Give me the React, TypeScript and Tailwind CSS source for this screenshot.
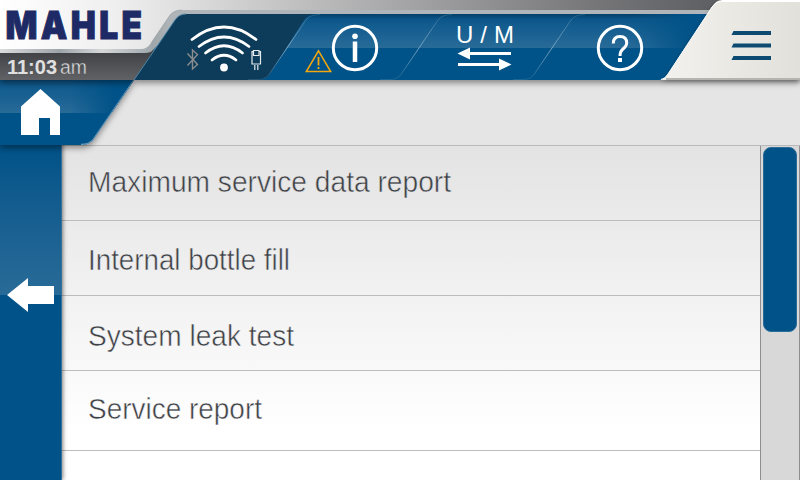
import React from "react";

const menuItems = [
  { label: "Maximum service data report", width: 363, row: "h-[75px]", y: 46, line: "#e8e8e8" },
  { label: "Internal bottle fill", width: 202, row: "h-[75px]", y: 49, line: "#f0f0f0" },
  { label: "System leak test", width: 206, row: "h-[75px]", y: 50, line: "#f9f9f9" },
  { label: "Service report", width: 174, row: "h-20", y: 48, line: "#fefefe" },
];

function Header() {
  return (
    <svg className="absolute left-0 top-0 z-10" width="800" height="160" viewBox="0 0 800 160">
      <defs>
        <linearGradient id="silver" x1="0" x2="800" y1="0" y2="0" gradientUnits="userSpaceOnUse">
          <stop offset="0" stopColor="#fff" />
          <stop offset=".15" stopColor="#eeeeee" />
          <stop offset=".25" stopColor="#dadadb" />
          <stop offset=".37" stopColor="#c0c0c1" />
          <stop offset=".55" stopColor="#9c9c9e" />
          <stop offset=".75" stopColor="#757578" />
          <stop offset=".88" stopColor="#606165" />
        </linearGradient>
        <linearGradient id="rim" x1="0" x2="170" y1="0" y2="0" gradientUnits="userSpaceOnUse">
          <stop offset="0" stopColor="#dadcdd" />
          <stop offset=".35" stopColor="#9da4a8" />
          <stop offset=".6" stopColor="#d5d8d9" />
          <stop offset=".9" stopColor="#9fa7ab" />
          <stop offset="1" stopColor="#aeb4b7" />
        </linearGradient>
        <linearGradient id="clock" x1="0" x2="0" y1="0" y2="1">
          <stop offset="0" stopColor="#3e3f42" />
          <stop offset="1" stopColor="#606266" />
        </linearGradient>
        <linearGradient id="gloss" x1="0" x2="0" y1="0" y2="1">
          <stop offset="0" stopColor="#003f68" />
          <stop offset=".14" stopColor="#0b5487" />
          <stop offset=".3" stopColor="#115b8e" />
          <stop offset="1" stopColor="#286b98" />
        </linearGradient>
        <linearGradient id="fade" x1="0" x2="1" y1="0" y2="0">
          <stop offset="0" stopColor="#005288" stopOpacity="0" />
          <stop offset=".7" stopColor="#005288" />
        </linearGradient>
        <linearGradient id="seam" x1="0" x2="0" y1="14" y2="80" gradientUnits="userSpaceOnUse">
          <stop offset="0" stopColor="#6693b2" stopOpacity=".3" />
          <stop offset=".5" stopColor="#7ba6c1" />
          <stop offset="1" stopColor="#6693b2" stopOpacity=".25" />
        </linearGradient>
        <linearGradient id="cream" x1="0" x2="1" y1="0" y2="0">
          <stop offset="0" stopColor="#f3f2ee" />
          <stop offset="1" stopColor="#e1e0da" />
        </linearGradient>
        <filter id="shadow" x="-10%" y="-10%" width="120%" height="140%">
          <feDropShadow dx="0" dy="3" stdDeviation="3" floodOpacity=".42" />
        </filter>
        <filter id="tabShadow" x="-10%" y="-10%" width="120%" height="140%">
          <feDropShadow dx="0" dy="1" stdDeviation="2" floodOpacity=".35" />
        </filter>
        <clipPath id="homeClip"><path d="M0 80H134L93 140Q89 145 81 145H0Z" /></clipPath>
      </defs>

      {/* Home tab */}
      <g filter="url(#shadow)">
        <path d="M0 80H134L93 140Q89 145 81 145H0Z" fill="#005288" />
      </g>
      <g clipPath="url(#homeClip)">
        <rect y="76" width="134" height="37" fill="url(#gloss)" />
        <rect x="70" y="76" width="64" height="37" fill="url(#fade)" />
        <path d="M134 80L93 140Q89 144.500 81 144.500" fill="none" stroke="#6c9cbb" strokeWidth="1.500" />
      </g>
      <path d="M40.500 89L60 106.500V135H50V118H39V135H21V106.500Z" fill="#fff" />

      {/* Top bar */}
      <g filter="url(#shadow)">
        <rect width="800" height="80" fill="#005288" />
      </g>
      <rect width="800" height="15" fill="url(#silver)" />
      <rect x="170" y="10" width="560" height="4" fill="#afb5b8" />
      <rect x="280" y="14" width="440" height="34" fill="url(#gloss)" />
      <rect x="630" y="14" width="90" height="34" fill="url(#fade)" />

      {/* Clock and brand plates */}
      <path d="M0 50H165L136 80H0Z" fill="url(#clock)" />
      <path d="M0 0H200V14H190L153 50Q151 53 145 53H0Z" fill="url(#rim)" />
      <path d="M0 0H500V10H182Q174 10 170 15L151 43Q147 49 141 49H0Z" fill="url(#silver)" />

      {/* Connectivity tab */}
      <path d="M134 80L175 20Q179 14 186 14H314Q308 14 304 20L271 72Q267 80 258 80Z" fill="#0d3b5a" />
      <path d="M134 80L175 20Q179 14 186 14" fill="none" stroke="#4c83a4" strokeWidth="1" />
      <path d="M151 43L170 15Q174 10 182 10" fill="none" stroke="#8e979c" strokeOpacity=".5" />
      <g fill="none" stroke="url(#seam)" strokeWidth="1">
        <path d="M248 79.500H259Q266 79.500 270 73L306 20Q310 14.500 320 14.500" />
        <path d="M380 79.500H391Q398 79.500 402 73L438 20Q442 14.500 452 14.500" />
        <path d="M513 79.500H524Q531 79.500 535 73L571 20Q575 14.500 585 14.500" />
      </g>
      <g fill="none" stroke="#fff" strokeWidth="2.800" strokeLinecap="round">
        <path d="M192 39.500Q224 14.500 256 39.500" />
        <path d="M199 46.500Q224 27.500 249 46.500" />
        <path d="M205.500 53Q224 38.500 242.500 53" />
        <path d="M212 60Q224 50.500 236 60" />
      </g>
      <circle cx="224" cy="67.500" r="3.900" fill="#fff" />
      <path d="M187.500 53.500L197.500 64.500L192.500 69V50L197.500 54.500L187.500 65.500" fill="none" stroke="#8b8c8d" strokeWidth="1.400" />
      <path d="M253.500 51.500H252V64H260.500V51.500H259M253.500 50.500H259V55.500H253.500ZM254.800 65V70M257.800 65V70" fill="none" stroke="#e5eaed" strokeWidth="1.200" />

      {/* Information */}
      <circle cx="355" cy="48" r="21.700" fill="none" stroke="#fff" strokeWidth="3" />
      <circle cx="355" cy="36.300" r="2.800" fill="#fff" />
      <path d="M355 41.500V62" stroke="#fff" strokeWidth="4.500" />
      <path d="M318.500 50.800L330.700 71.500H306.300Z" fill="none" stroke="#f4a60e" strokeWidth="1.500" />
      <path d="M318.500 57V65.500M318.500 67V69" stroke="#f4a60e" strokeWidth="1.800" />

      {/* Units */}
      <text x="456" y="43" textLength="58" fontSize="24" fill="#fff" fontFamily="'Liberation Sans', sans-serif">U / M</text>
      <path d="M511 53.500H466M458 64.500H502" stroke="#fff" strokeWidth="3" />
      <path d="M457.500 53.500L470 47.500V59.500ZM511.500 64.500L499 58.500V70.500Z" fill="#fff" />

      {/* Help */}
      <circle cx="620" cy="48" r="21.700" fill="none" stroke="#fff" strokeWidth="3" />
      <path d="M613.300 43.500Q613.300 36.500 620 36.500T626.700 43Q626.700 46 622.500 49.500Q620 51.500 620 56" fill="none" stroke="#fff" strokeWidth="3" />
      <path d="M618 58H622V62H618Z" fill="#fff" />

      {/* Menu tab */}
      <g filter="url(#tabShadow)">
        <path d="M659 80Q664 80 668 74L712 7Q716 0 722 0H800V80Z" fill="url(#cream)" />
      </g>
      <path d="M722 1H800" stroke="#fff" strokeWidth="2" />
      <path d="M666 79H800" stroke="#b5b4ae" strokeWidth="2" />
      <path d="M661 79.500Q665 79 668 74L712 7Q716 1 722 1" fill="none" stroke="#fff" strokeWidth="1" />
      <path d="M733.500 31H771V35H731.500ZM733.500 43.500H771V47.500H731.500ZM733.500 56H771V60H731.500Z" fill="#0d4a72" />

      <text
        x="5.500"
        y="38.500"
        textLength="140"
        lengthAdjust="spacingAndGlyphs"
        fontSize="39"
        fontWeight="900"
        fontFamily="Inter, 'Liberation Sans', sans-serif"
        letterSpacing="4"
        fill="#1e2a65"
        stroke="#1e2a65"
        strokeWidth="1"
      >
        MAHLE
      </text>
      <g fontFamily="'Liberation Sans', sans-serif" fill="#e0e0e0">
        <text x="7" y="74" fontSize="20" fontWeight="700" textLength="50">11:03</text>
        <text x="60" y="74" fontSize="20" textLength="27" lengthAdjust="spacingAndGlyphs" stroke="#55575a" strokeWidth=".4">am</text>
      </g>
    </svg>
  );
}

export default function App() {
  return (
    <div className="relative flex h-[480px] w-[800px] overflow-hidden bg-white">
      <Header />
      <aside className="relative w-[62px] shrink-0 border-r border-[#33729d] bg-[#005288] pt-[145px] shadow-[1px_0_4px_rgba(0,0,0,0.5)]">
        <div className="h-[150px] bg-linear-to-b from-[#005288] to-[#286b98]" />
        <svg className="-mt-[18px] block" width="61" height="36" viewBox="0 0 61 36">
          <path d="M7 18L28 1V9H54V27H28V35Z" fill="#fff" />
        </svg>
      </aside>
      <main className="flex grow flex-col bg-linear-to-b from-[#e3e3e3] from-30% to-white to-90%">
        <div className="h-[146px] shrink-0 border-b border-[#b9b9b9] bg-[#e5e5e5]" />
        <div className="flex grow">
          <ul className="w-[698px]">
            {menuItems.map((item) => (
              <li key={item.label} className={`${item.row} border-b border-[#bcbcbc]`}>
                <svg className="block" width="690" height="74">
                  <text
                    x="26"
                    y={item.y}
                    fontSize="29.500"
                    fontFamily="'Liberation Sans', sans-serif"
                    textLength={item.width}
                    lengthAdjust="spacingAndGlyphs"
                    fill="#3e4146"
                    stroke={item.line}
                    strokeWidth=".5"
                  >
                    {item.label}
                  </text>
                </svg>
              </li>
            ))}
          </ul>
          <div className="grow border-l border-r border-[#8e8e8e] bg-[#d8d8d8] pl-0.5 pt-px">
            <div className="h-[185px] w-[34px] rounded-lg border border-[#2b6d99] bg-[#005288]" />
          </div>
        </div>
      </main>
    </div>
  );
}
